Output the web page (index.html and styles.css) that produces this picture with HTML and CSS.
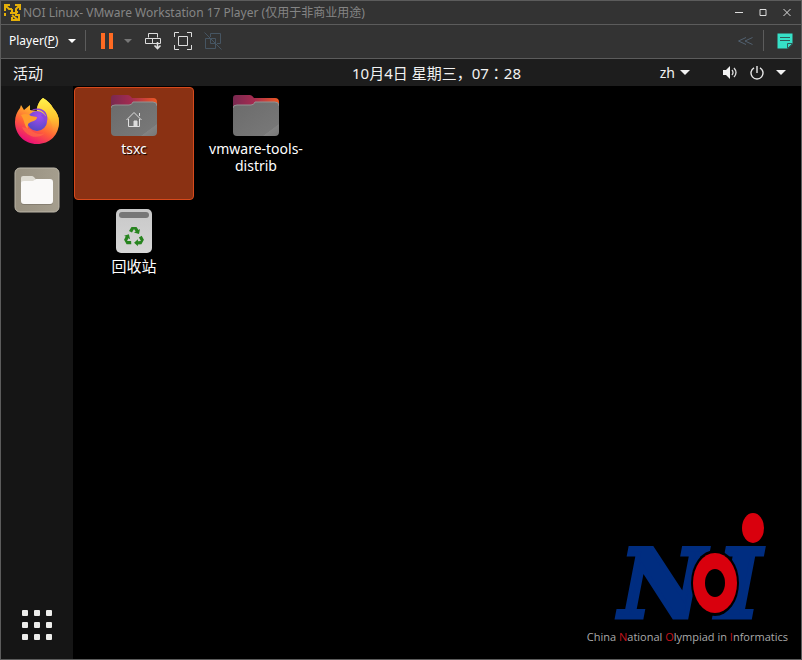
FILE: index.html
```html
<!DOCTYPE html>
<html lang="zh-CN">
<head>
<meta charset="utf-8">
<title>NOI Linux- VMware Workstation 17 Player</title>
<link rel="stylesheet" href="styles.css">
</head>
<body>
<div class="window">
  <header class="titlebar">
    <svg class="app-logo" width="18" height="18" viewBox="0 0 18 18" fill="none" stroke="#e5b009" stroke-width="2"><path d="M1 7V1h5M1 1l4 4h3M11 1h5v5M16 1l-4 4v3M8 5v3M1 12V9M6 9h5M14 8h-2v3h4M8 13v3h7v-4M8 11l6 5"/></svg>
    <h1 class="title">NOI Linux- VMware Workstation 17 Player (仅用于非商业用途)</h1>
    <div class="window-buttons">
      <button class="win-btn" aria-label="最小化"><svg width="8" height="8" viewBox="0 0 8 8"><path d="M0 3.500h8" stroke="#ddd"/></svg></button>
      <button class="win-btn" aria-label="最大化"><svg width="8" height="8" viewBox="0 0 8 8"><path d="M1 .5h6v6H1z" fill="none" stroke="#ddd"/></svg></button>
      <button class="win-btn" aria-label="关闭"><svg width="8" height="8" viewBox="0 0 8 8"><path d="M.5 0l7 7M7.500 0l-7 7" stroke="#ddd"/></svg></button>
    </div>
  </header>

  <nav class="toolbar">
    <button class="player-menu"><span>Player(<u>P</u>)</span><svg width="8" height="4" viewBox="0 0 8 4"><path d="M0 0h8L4 4z" fill="#fff"/></svg></button>
    <span class="divider"></span>
    <button class="pause" aria-label="挂起"><svg width="12" height="16" viewBox="0 0 12 16"><path d="M0 0h4v16H0zM8 0h4v16H8z" fill="#ff6a22"/></svg></button>
    <button class="pause-menu" aria-label="电源选项"><svg width="8" height="4" viewBox="0 0 8 4"><path d="M0 0h8L4 4z" fill="#777"/></svg></button>
    <button class="tool" aria-label="发送 Ctrl+Alt+Del"><svg width="18" height="18" viewBox="0 0 18 18" fill="none" stroke="#ddd"><path d="M4.500 5.500v-4h9v4M1.500 6.500h7v5h-7zM8.500 6.500h8v5h-8z"/><path d="M13.500 10v7M10.500 13.500l3 3 3-3" stroke-width="1.600"/></svg></button>
    <button class="tool" aria-label="全屏"><svg width="18" height="18" viewBox="0 0 18 18" fill="none" stroke="#ddd"><path d="M4.500 4.500h9v9h-9zM.5 5V.5H5M13 .5h4.500V5M17.500 13v4.500H13M5 17.500H.5V13"/></svg></button>
    <button class="tool" aria-label="Unity" disabled><svg width="18" height="18" viewBox="0 0 18 18" fill="none" stroke="#465562"><path d="M6.500 5V1.500h10v10H13M1.500 6.500h10v10h-10zM6.500 6v5.500H12M.5.5l17 17"/></svg></button>
    <div class="toolbar-end">
      <button class="collapse" aria-label="收起" disabled><svg width="15" height="8" viewBox="0 0 15 8" fill="none" stroke="#526170"><path d="M8 .5L.5 4 8 7.500M14.500.5L7 4l7.500 3.500"/></svg></button>
      <span class="divider"></span>
      <button class="notes" aria-label="消息"><svg width="16" height="16" viewBox="0 0 16 16"><path d="M.5.5h15V11L11 15.500H.5z" fill="#36e0c7"/><path d="M3 4.500h10M3 7.500h10" stroke="#315b59"/><path d="M10.500 15.500v-5h5z" fill="#36e0c7" stroke="#315b59"/></svg></button>
    </div>
  </nav>

  <div class="panel">
    <button class="activities">活动</button>
    <time class="clock">10月4日 星期三，07<span lang="ja">：</span>28</time>
    <div class="status">
      <button class="language">zh<svg width="10" height="5" viewBox="0 0 10 5"><path d="M0 0h10L5 5z" fill="#f2f2f2"/></svg></button>
      <button class="system" aria-label="系统菜单">
        <svg width="15" height="14" viewBox="0 0 15 14"><path d="M0 4h3l4-4v13L3 9H0z" fill="#f2f2f2"/><path d="M9 4q2 2.500 0 5M11 2q4 4.500 0 9" fill="none" stroke="#ddd" stroke-width="1.300"/></svg>
        <svg width="14" height="14" viewBox="0 0 14 14" fill="none" stroke="#e8e8e8" stroke-width="1.400"><path d="M4 1.800a6 6 0 1 0 6 0M7 0v7"/></svg>
        <svg width="10" height="5" viewBox="0 0 10 5"><path d="M0 0h10L5 5z" fill="#f2f2f2"/></svg>
      </button>
    </div>
  </div>

  <main class="desktop">
    <aside class="dock">
      <button class="dock-item" aria-label="Firefox">
        <svg width="46" height="48" viewBox="0 0 46 48">
          <defs>
            <linearGradient id="fire" x1=".8" y1="0" x2=".3" y2="1"><stop offset="0" stop-color="#fff04a"/><stop offset=".35" stop-color="#ffb52d"/><stop offset=".65" stop-color="#ff6038"/><stop offset="1" stop-color="#e8077e"/></linearGradient>
            <linearGradient id="flame" x1="0" y1="0" x2="0" y2="1"><stop offset="0" stop-color="#fff34b"/><stop offset=".5" stop-color="#ffc52f"/><stop offset="1" stop-color="#ff7139" stop-opacity="0"/></linearGradient>
            <radialGradient id="globe" cx=".6" cy=".25" r=".8"><stop offset="0" stop-color="#a34cf0"/><stop offset="1" stop-color="#5149c2"/></radialGradient>
          </defs>
          <path d="M29 1c5 3 8 6 10 10 4 4 6 9 6 14 0 13-9 22-22 22S1 37 1 25c0-6 2-10 5-14l1-3 3 5 6-5v5l7 1c0-5 2-10 6-13z" fill="url(#fire)"/>
          <path d="M29 1c5 3 8 6 10 10 4 4 6 9 6 14 0 6-3 12-8 15 3-6 2-14-3-20l-11-4c-1-6 2-12 6-15z" fill="url(#flame)"/>
          <circle cx="23" cy="24" r="10" fill="url(#globe)"/>
          <path d="M17 14c6-3 14 0 15 6-2-2-3-2-5-2 3 3 5 6 5 9 3-5 1-12-3-14s-9-2-12 1z" fill="#8d45d9"/>
          <path d="M7 18c4-2 8-1 10 1l6 1c0 3-3 4-6 5-3 1-4 3-3 7-4-3-3-8-7-14z" fill="#ff9d2c"/>
          <path d="M8 30c4 10 16 13 23 6-4 2-11 1-15-4" fill="#ff6845" opacity=".75"/>
        </svg>
      </button>
      <button class="dock-item" aria-label="文件">
        <svg width="46" height="46" viewBox="0 0 46 46">
          <defs><linearGradient id="files"><stop offset="0" stop-color="#979080"/><stop offset="1" stop-color="#a59e8e"/></linearGradient></defs>
          <rect x="1" y="1" width="44" height="44" rx="5" fill="url(#files)" stroke="#bcb6a8"/>
          <path d="M7 15q0-6 3-6h8q2 0 3 3h14q4 0 4 4v19q0 3-3 3H10q-3 0-3-3z" fill="#756e62" opacity=".6"/>
          <path d="M7 14v-3q0-2 2-2h9q2 0 4 4v3H7z" fill="#dedbd2"/>
          <path d="M7 16q0-2 3-2h9l3-2h14q3 0 3 3v19q0 3-3 3H10q-3 0-3-3z" fill="#faf9f8"/>
        </svg>
      </button>
      <button class="dock-item apps" aria-label="显示应用程序">
        <svg width="30" height="30" viewBox="0 0 30 30" fill="#eeeeec"><rect width="6" height="6" rx="1"/><rect x="12" width="6" height="6" rx="1"/><rect x="24" width="6" height="6" rx="1"/><rect y="12" width="6" height="6" rx="1"/><rect x="12" y="12" width="6" height="6" rx="1"/><rect x="24" y="12" width="6" height="6" rx="1"/><rect y="24" width="6" height="6" rx="1"/><rect x="12" y="24" width="6" height="6" rx="1"/><rect x="24" y="24" width="6" height="6" rx="1"/></svg>
      </button>
    </aside>

    <section class="workspace">
      <div class="shortcuts">
        <button class="shortcut selected">
          <svg width="46" height="42" viewBox="0 1 46 42">
            <defs>
              <linearGradient id="tab"><stop offset="0" stop-color="#792950"/><stop offset=".45" stop-color="#a52b50"/><stop offset="1" stop-color="#ed5923"/></linearGradient>
              <linearGradient id="front" x2="1" y2="1"><stop offset="0" stop-color="#6b6b6b"/><stop offset=".82" stop-color="#777"/><stop offset=".83" stop-color="#828282"/><stop offset="1" stop-color="#777"/></linearGradient>
            </defs>
            <path d="M0 18V4q0-3 3-3h14q2 0 4 3h21q4 0 4 4v10z" fill="url(#tab)"/>
            <path d="M0 15q0-4 4-4h14q3 0 4-3h20q4 0 4 4v26q0 4-4 4H4q-4 0-4-4z" fill="url(#front)"/>
            <path d="M0 14q0-3 4-3h14q3 0 4-3h20q4 0 4 4" fill="none" stroke="#929292"/>
            <path d="M15.500 26L23 18.500l7.500 7.500M17.500 25v7.500h11V25M23 32v-5h3v5M28.500 22v-3" fill="none" stroke="#e0e0e0"/><path d="M23 27h3v5h-3z" fill="#ddd"/>
          </svg>
          <span>tsxc</span>
        </button>
        <button class="shortcut">
          <svg width="46" height="42" viewBox="0 1 46 42">
            <path d="M0 18V4q0-3 3-3h14q2 0 4 3h21q4 0 4 4v10z" fill="url(#tab)"/>
            <path d="M0 15q0-4 4-4h14q3 0 4-3h20q4 0 4 4v26q0 4-4 4H4q-4 0-4-4z" fill="url(#front)"/>
            <path d="M0 14q0-3 4-3h14q3 0 4-3h20q4 0 4 4" fill="none" stroke="#929292"/>
          </svg>
          <span>vmware-tools-<br>distrib</span>
        </button>
        <button class="shortcut trash">
          <svg width="46" height="46" viewBox="0 0 46 46">
            <defs><linearGradient id="bin" x2="0" y2="1"><stop offset="0" stop-color="#c8c8c8"/><stop offset="1" stop-color="#d6d6d6"/></linearGradient></defs>
            <rect x="5" width="36" height="44" rx="5" fill="url(#bin)"/>
            <rect x="8" y="3" width="30" height="6" rx="3" fill="#777"/>
            <g fill="#27841f">
              <path id="arrow" d="M18 22l2.500-4h5l2 3 1.500-1-1 5-5-1.500 1.700-1-1.700-2.500-2 3.500z"/>
              <use href="#arrow" transform="rotate(120 23 28)"/>
              <use href="#arrow" transform="rotate(240 23 28)"/>
            </g>
          </svg>
          <span>回收站</span>
        </button>
      </div>

      <figure class="brand">
        <svg width="166" height="112" viewBox="-6 0 166 112" role="img" aria-label="NOI">
          <text class="brand-letter" x="10" y="106">N</text>
          <text class="brand-letter" x="107" y="106">I</text>
          <ellipse cx="105" cy="72" rx="24" ry="33"/>
          <ellipse cx="105" cy="72" rx="22" ry="30" fill="#d9000d"/>
          <ellipse cx="105" cy="72" rx="10" ry="14"/>
          <ellipse cx="143" cy="17" rx="11" ry="15" fill="#d9000d"/>
        </svg>
        <figcaption>China <b>N</b>ational <b>O</b>lympiad in <b>I</b>nformatics</figcaption>
      </figure>
    </section>
  </main>
</div>
</body>
</html>
```
FILE: styles.css
```css
* { box-sizing: border-box; }

body {
  margin: 0;
  background: #000;
  color: #fff;
  font-family: "Noto Sans", "Noto Sans CJK SC", sans-serif;
}

button {
  display: flex;
  align-items: center;
  padding: 0;
  border: 0;
  background: none;
  color: inherit;
  font: inherit;
}

svg { display: block; flex: none; }

:lang(ja) { font-family: "Noto Sans CJK JP", sans-serif; line-height: 1; }

.window {
  display: flex;
  flex-direction: column;
  min-height: 100vh;
  border: 1px solid #5c5c5c;
}

.titlebar {
  display: flex;
  align-items: center;
  height: 24px;
  padding: 0 10px 0 3px;
  gap: 1px;
  border-bottom: 1px solid #5c5c5c;
  background: #333;
}

.title {
  margin: 0;
  color: #858585;
  font-size: 12px;
  font-weight: 400;
  line-height: 20px;
  white-space: nowrap;
}

.window-buttons { display: flex; gap: 16px; margin-left: auto; }

.toolbar {
  display: flex;
  align-items: center;
  height: 34px;
  padding: 0 8px 2px;
  border-bottom: 1px solid #5c5c5c;
  background: #333;
}

.player-menu { gap: 10px; font-size: 12px; }
.player-menu u { text-underline-offset: 2px; }
.divider { width: 1px; height: 21px; margin: 0 15px 0 9px; background: #5c5c5c; }
.pause { margin-right: 11px; }
.pause-menu { margin-right: 12px; }
.tool { margin-right: 12px; }
.toolbar-end { display: flex; align-items: center; margin-left: auto; }
.toolbar-end .divider { margin: 0 13px 0 10px; }

.panel {
  display: grid;
  grid-template-columns: 1fr auto 1fr;
  align-items: center;
  height: 27px;
  padding: 0 15px 0 12px;
  background: #1d1d1d;
  color: #f2f2f2;
  font-size: 14px;
  line-height: 20px;
}

.activities { font-size: 15px; }
.clock { padding-left: 74px; font-size: 15px; white-space: nowrap; }
.status { display: flex; justify-content: flex-end; gap: 33px; }
.language { gap: 5px; }
.system { gap: 12px; }

.desktop { display: flex; flex: 1; }

.dock {
  display: flex;
  flex-direction: column;
  align-items: center;
  gap: 22px;
  width: 72px;
  padding: 11px 0 19px;
  background: #151515;
}

.apps { margin-top: auto; }

.workspace {
  display: flex;
  flex: 1;
  flex-direction: column;
  justify-content: space-between;
  padding: 1px;
}

.shortcuts {
  display: grid;
  grid-template-columns: 120px 120px;
  grid-auto-rows: 113px;
  gap: 1px 2px;
}

.shortcut {
  flex-direction: column;
  justify-content: flex-start;
  gap: 3px;
  padding-top: 7px;
  border: 1px solid transparent;
  border-radius: 4px;
  font-size: 14px;
  line-height: 17px;
  text-shadow: 1px 1px 1px #000;
}

.selected { border-color: #d74a1c; background: #8a3113; }
.trash { font-size: 15px; }

.brand {
  display: flex;
  flex-direction: column;
  align-items: center;
  align-self: flex-end;
  gap: 6px;
  margin: 0 12px 13px 0;
}

.brand-letter {
  fill: #002d80;
  stroke: #002d80;
  stroke-width: 5px;
  font-family: "DejaVu Serif", serif;
  font-size: 93px;
  font-style: italic;
  font-weight: 700;
}

.brand figcaption {
  color: #aaa;
  font-family: "Open Sans", sans-serif;
  font-size: 11px;
  line-height: 16px;
  white-space: nowrap;
}

.brand b { color: #c4141b; font-weight: 400; }
```
